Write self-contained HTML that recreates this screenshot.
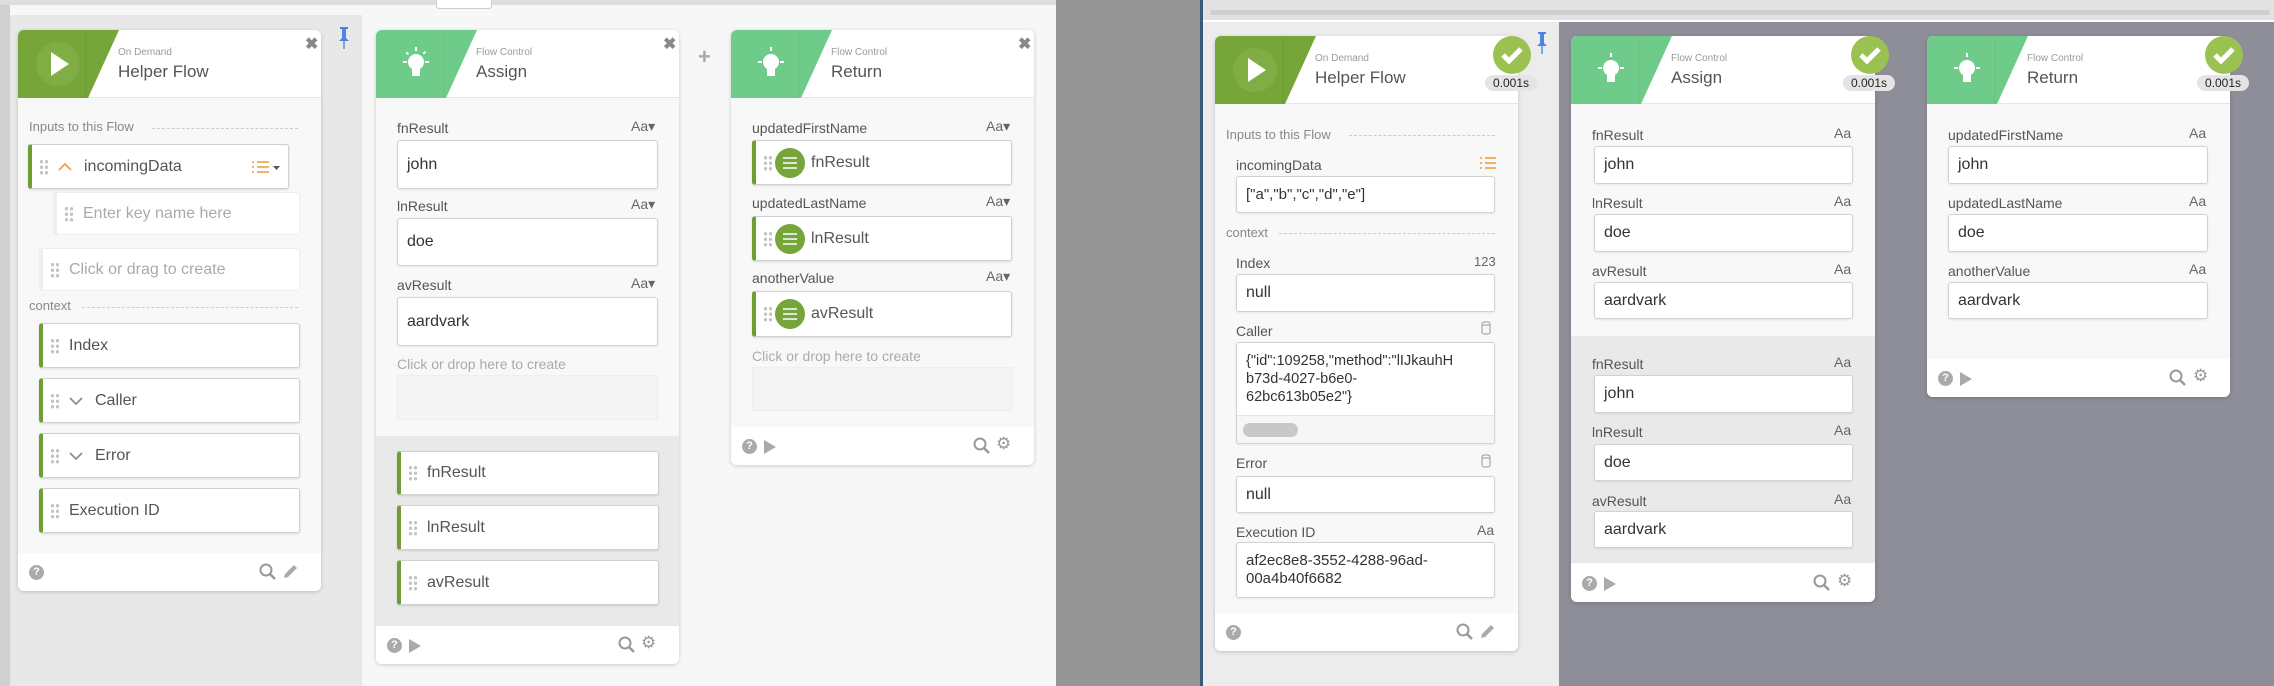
<!DOCTYPE html>
<html><head><meta charset="utf-8"><style>
*{box-sizing:border-box;margin:0;padding:0}
body{width:2274px;height:686px;position:relative;overflow:hidden;background:#f7f7f7;font-family:"Liberation Sans",sans-serif;color:#555}
.a{position:absolute}
.card{position:absolute;background:#fff;border-radius:6px;box-shadow:0 1px 4px rgba(0,0,0,.18);overflow:hidden}
.hdr{position:absolute;left:0;top:0;right:0;height:68px;border-bottom:1px solid #e6e6e6;background:#fff}
.body{position:absolute;left:0;top:68px;right:0;background:#f8f8f8}
.sub{position:absolute;font-size:10px;color:#9a9a9a}
.ttl{position:absolute;font-size:17px;color:#555}
.lbl{position:absolute;font-size:14px;color:#555}
.sec{position:absolute;font-size:13px;color:#888}
.dash{position:absolute;border-top:1px dashed #ccc;height:0}
.box{position:absolute;background:#fff;border:1px solid #d2d2d2;border-radius:3px;font-size:16px;color:#333;padding-left:9px;display:flex;align-items:center;box-shadow:0 1px 2px rgba(0,0,0,.08)}
.pill{position:absolute;background:#fff;border:1px solid #d0d0d0;border-left:4px solid #6f9f34;border-radius:3px;font-size:16px;color:#555;display:flex;align-items:center;box-shadow:0 1px 2px rgba(0,0,0,.12)}
.dots{width:10px;height:16px;margin-left:7px;margin-right:9px;background:radial-gradient(circle,#c4c4c4 1.6px,transparent 1.8px) 0 0/5px 5.5px}
.aa{position:absolute;font-size:14px;color:#666}
.foot{position:absolute;left:0;right:0;bottom:0;height:38px;background:#fff}
.x{position:absolute;font-size:16px;color:#888;font-weight:bold}
.chk{position:absolute;width:38px;height:38px;border-radius:50%;background:#9bc152}
.tm{position:absolute;background:#e4e4e4;border-radius:8px;font-size:12px;color:#222;width:52px;height:16px;text-align:center;line-height:16px}
</style></head><body>
<div class="a" style="left:0;top:0;width:2274px;height:5px;background:#dedede"></div>
<div class="a" style="left:436px;top:0;width:56px;height:9px;background:#fff;border:1px solid #ccc;border-top:none;border-radius:0 0 3px 3px"></div>
<div class="a" style="left:0;top:15px;width:362px;height:671px;background:#e8e8e8"></div>
<div class="a" style="left:0;top:5px;width:10px;height:681px;background:#d0d0d0"></div>
<div class="a" style="left:1056px;top:0;width:144px;height:686px;background:#959595"></div>
<div class="a" style="left:1200px;top:0;width:3px;height:686px;background:#3a5a7a"></div>
<div class="a" style="left:1203px;top:0;width:1071px;height:686px;background:#8e8e98"></div>
<div class="a" style="left:1203px;top:0;width:1071px;height:20px;background:#e2e2e2"></div>
<div class="a" style="left:1210px;top:10px;width:1060px;height:5px;background:#cfcfcf;border-radius:3px"></div>
<div class="a" style="left:1203px;top:20px;width:356px;height:666px;background:#ececec"></div>
<div class="a" style="left:1203px;top:20px;width:1071px;height:2px;background:#fff"></div>

<svg class="a" style="left:337px;top:26px" width="14" height="24" viewBox="0 0 14 24"><path d="M3 1h8v2h-2v9l3 3H2l3-3V3H3z M6.3 15h1.4v8h-1.4z" fill="#4a86e0"/></svg>
<svg class="a" style="left:1535px;top:31px" width="14" height="24" viewBox="0 0 14 24"><path d="M3 1h8v2h-2v9l3 3H2l3-3V3H3z M6.3 15h1.4v8h-1.4z" fill="#4a86e0"/></svg>
<div class="a" style="left:698px;top:44px;font-size:22px;color:#aaa;font-weight:bold">+</div>

<!-- CARD 1 -->
<div class="card" style="left:18px;top:30px;width:303px;height:561px">
 <div class="body" style="bottom:38px"></div>
 <div class="hdr"><svg class="a" style="left:0;top:0" width="110" height="68"><polygon points="0,0 101,0 70,68 0,68" fill="#76a63a"/><line x1="68" y1="0" x2="68" y2="68" stroke="#6d9b35"/><circle cx="40" cy="34" r="22" fill="#80ae45"/><polygon points="33,22 51,34 33,46" fill="#fff"/></svg>
 <div class="sub" style="left:100px;top:17px">On Demand</div><div class="ttl" style="left:100px;top:32px">Helper Flow</div>
 <div class="x" style="left:287px;top:4px">✖</div></div>
 <div class="sec" style="left:11px;top:89px">Inputs to this Flow</div><div class="dash" style="left:134px;top:98px;width:146px"></div>
 <div class="pill" style="left:10px;top:114px;width:261px;height:45px"><div class="dots"></div><svg width="14" height="10" style="margin-right:12px"><path d="M1 8l6-6 6 6" stroke="#f0a040" stroke-width="1.8" fill="none"/></svg>incomingData<svg style="margin-left:auto;margin-right:6px" width="30" height="14"><g stroke="#f0a040" stroke-width="1.6"><line x1="0" y1="2" x2="2" y2="2"/><line x1="5" y1="2" x2="17" y2="2"/><line x1="0" y1="7" x2="2" y2="7"/><line x1="5" y1="7" x2="17" y2="7"/><line x1="0" y1="12" x2="2" y2="12"/><line x1="5" y1="12" x2="17" y2="12"/></g><polygon points="21,6 28,6 24.5,10" fill="#555"/></svg></div>
 <div class="pill" style="left:35px;top:162px;width:247px;height:43px;border-left-color:#b5d08e;color:#aaa;box-shadow:none;border-color:#eee"><div class="dots"></div>Enter key name here</div>
 <div class="pill" style="left:21px;top:218px;width:261px;height:43px;border-left-color:#b5d08e;color:#aaa;box-shadow:none;border-color:#eee"><div class="dots"></div>Click or drag to create</div>
 <div class="sec" style="left:11px;top:268px">context</div><div class="dash" style="left:64px;top:277px;width:216px"></div>
 <div class="pill" style="left:21px;top:293px;width:261px;height:45px"><div class="dots"></div>Index</div>
 <div class="pill" style="left:21px;top:348px;width:261px;height:45px"><div class="dots"></div><svg width="14" height="10" style="margin-right:12px"><path d="M1 2l6 6 6-6" stroke="#888" stroke-width="1.6" fill="none"/></svg>Caller</div>
 <div class="pill" style="left:21px;top:403px;width:261px;height:45px"><div class="dots"></div><svg width="14" height="10" style="margin-right:12px"><path d="M1 2l6 6 6-6" stroke="#888" stroke-width="1.6" fill="none"/></svg>Error</div>
 <div class="pill" style="left:21px;top:458px;width:261px;height:45px"><div class="dots"></div>Execution ID</div>
 <div class="foot"><div class="a" style="left:11px;top:12px;width:15px;height:15px;border-radius:50%;background:#aaa;color:#fff;font-size:11px;font-weight:bold;text-align:center;line-height:15px">?</div>
 <svg class="a" style="left:241px;top:10px" width="18" height="18"><circle cx="7" cy="7" r="5.5" stroke="#999" stroke-width="2" fill="none"/><line x1="11" y1="11" x2="16" y2="16" stroke="#999" stroke-width="2.5"/></svg>
 <svg class="a" style="left:263px;top:10px" width="18" height="18"><path d="M3 15l1-4 9-9 3 3-9 9z" fill="#aaa"/></svg></div>
</div>

<!-- CARD 2 -->
<div class="card" style="left:376px;top:30px;width:303px;height:634px">
 <div class="body" style="bottom:38px"></div>
 <div class="a" style="left:0;top:406px;right:0;height:190px;background:#e9e9ea"></div>
 <div class="hdr"><svg class="a" style="left:0;top:0" width="110" height="68"><polygon points="0,0 101,0 70,68 0,68" fill="#6fcb8a"/><line x1="68" y1="0" x2="68" y2="68" stroke="#68c283"/><g fill="#fff"><circle cx="40" cy="32" r="8"/><rect x="36" y="37" width="8" height="9"/><rect x="39" y="17" width="2" height="4"/><rect x="27" y="31" width="4" height="2"/><rect x="49" y="31" width="4" height="2"/><rect x="30" y="22" width="3" height="2" transform="rotate(40 31 23)"/><rect x="47" y="22" width="3" height="2" transform="rotate(-40 48 23)"/></g></svg>
 <div class="sub" style="left:100px;top:17px">Flow Control</div><div class="ttl" style="left:100px;top:32px">Assign</div>
 <div class="x" style="left:287px;top:4px">✖</div></div>
 <div class="lbl" style="left:21px;top:90px">fnResult</div><div class="aa" style="left:255px;top:88px">Aa▾</div>
 <div class="box" style="left:21px;top:110px;width:261px;height:49px">john</div>
 <div class="lbl" style="left:21px;top:168px">lnResult</div><div class="aa" style="left:255px;top:166px">Aa▾</div>
 <div class="box" style="left:21px;top:188px;width:261px;height:48px">doe</div>
 <div class="lbl" style="left:21px;top:247px">avResult</div><div class="aa" style="left:255px;top:245px">Aa▾</div>
 <div class="box" style="left:21px;top:267px;width:261px;height:49px">aardvark</div>
 <div class="lbl" style="left:21px;top:326px;color:#aaa">Click or drop here to create</div>
 <div class="a" style="left:21px;top:345px;width:261px;height:45px;background:#f4f4f4;border:1px solid #eee"></div>
 <div class="pill" style="left:21px;top:421px;width:262px;height:44px"><div class="dots"></div>fnResult</div>
 <div class="pill" style="left:21px;top:475px;width:262px;height:45px"><div class="dots"></div>lnResult</div>
 <div class="pill" style="left:21px;top:530px;width:262px;height:45px"><div class="dots"></div>avResult</div>
 <div class="foot"><div class="a" style="left:11px;top:12px;width:15px;height:15px;border-radius:50%;background:#aaa;color:#fff;font-size:11px;font-weight:bold;text-align:center;line-height:15px">?</div><svg class="a" style="left:32px;top:12px" width="14" height="16"><polygon points="1,1 13,8 1,15" fill="#aaa"/></svg>
 <svg class="a" style="left:242px;top:10px" width="18" height="18"><circle cx="7" cy="7" r="5.5" stroke="#999" stroke-width="2" fill="none"/><line x1="11" y1="11" x2="16" y2="16" stroke="#999" stroke-width="2.5"/></svg>
 <div class="a" style="left:265px;top:7px;font-size:17px;color:#999">⚙</div></div>
</div>

<!-- CARD 3 -->
<div class="card" style="left:731px;top:30px;width:303px;height:435px">
 <div class="body" style="bottom:38px"></div>
 <div class="hdr"><svg class="a" style="left:0;top:0" width="110" height="68"><polygon points="0,0 101,0 70,68 0,68" fill="#6fcb8a"/><line x1="68" y1="0" x2="68" y2="68" stroke="#68c283"/><g fill="#fff"><circle cx="40" cy="32" r="8"/><rect x="36" y="37" width="8" height="9"/><rect x="39" y="17" width="2" height="4"/><rect x="27" y="31" width="4" height="2"/><rect x="49" y="31" width="4" height="2"/></g></svg>
 <div class="sub" style="left:100px;top:17px">Flow Control</div><div class="ttl" style="left:100px;top:32px">Return</div>
 <div class="x" style="left:287px;top:4px">✖</div></div>
 <div class="lbl" style="left:21px;top:90px">updatedFirstName</div><div class="aa" style="left:255px;top:88px">Aa▾</div>
 <div class="pill" style="left:21px;top:110px;width:260px;height:45px"><div class="dots" style="margin-right:2px"></div><svg width="30" height="30" style="margin-right:6px"><circle cx="15" cy="15" r="15" fill="#76a63a"/><g stroke="#fff" stroke-width="1.5"><line x1="8" y1="10" x2="22" y2="10"/><line x1="8" y1="15" x2="22" y2="15"/><line x1="8" y1="20" x2="22" y2="20"/></g></svg>fnResult</div>
 <div class="lbl" style="left:21px;top:165px">updatedLastName</div><div class="aa" style="left:255px;top:163px">Aa▾</div>
 <div class="pill" style="left:21px;top:186px;width:260px;height:45px"><div class="dots" style="margin-right:2px"></div><svg width="30" height="30" style="margin-right:6px"><circle cx="15" cy="15" r="15" fill="#76a63a"/><g stroke="#fff" stroke-width="1.5"><line x1="8" y1="10" x2="22" y2="10"/><line x1="8" y1="15" x2="22" y2="15"/><line x1="8" y1="20" x2="22" y2="20"/></g></svg>lnResult</div>
 <div class="lbl" style="left:21px;top:240px">anotherValue</div><div class="aa" style="left:255px;top:238px">Aa▾</div>
 <div class="pill" style="left:21px;top:261px;width:260px;height:46px"><div class="dots" style="margin-right:2px"></div><svg width="30" height="30" style="margin-right:6px"><circle cx="15" cy="15" r="15" fill="#76a63a"/><g stroke="#fff" stroke-width="1.5"><line x1="8" y1="10" x2="22" y2="10"/><line x1="8" y1="15" x2="22" y2="15"/><line x1="8" y1="20" x2="22" y2="20"/></g></svg>avResult</div>
 <div class="lbl" style="left:21px;top:318px;color:#aaa">Click or drop here to create</div>
 <div class="a" style="left:21px;top:337px;width:261px;height:44px;background:#f4f4f4;border:1px solid #eee"></div>
 <div class="foot"><div class="a" style="left:11px;top:12px;width:15px;height:15px;border-radius:50%;background:#aaa;color:#fff;font-size:11px;font-weight:bold;text-align:center;line-height:15px">?</div><svg class="a" style="left:32px;top:12px" width="14" height="16"><polygon points="1,1 13,8 1,15" fill="#aaa"/></svg>
 <svg class="a" style="left:242px;top:10px" width="18" height="18"><circle cx="7" cy="7" r="5.5" stroke="#999" stroke-width="2" fill="none"/><line x1="11" y1="11" x2="16" y2="16" stroke="#999" stroke-width="2.5"/></svg>
 <div class="a" style="left:265px;top:7px;font-size:17px;color:#999">⚙</div></div>
</div>

<!-- CARD 4 -->
<div class="card" style="left:1215px;top:36px;width:303px;height:615px">
 <div class="body" style="bottom:38px"></div>
 <div class="hdr"><svg class="a" style="left:0;top:0" width="110" height="68"><polygon points="0,0 101,0 70,68 0,68" fill="#76a63a"/><line x1="68" y1="0" x2="68" y2="68" stroke="#6d9b35"/><circle cx="40" cy="34" r="22" fill="#80ae45"/><polygon points="33,22 51,34 33,46" fill="#fff"/></svg>
 <div class="sub" style="left:100px;top:17px">On Demand</div><div class="ttl" style="left:100px;top:32px">Helper Flow</div></div>
 <div class="sec" style="left:11px;top:91px">Inputs to this Flow</div><div class="dash" style="left:134px;top:99px;width:146px"></div>
 <div class="lbl" style="left:21px;top:121px">incomingData</div>
 <svg class="a" style="left:265px;top:120px" width="16" height="15"><g stroke="#f0a040" stroke-width="1.6"><line x1="0" y1="2" x2="2" y2="2"/><line x1="5" y1="2" x2="16" y2="2"/><line x1="0" y1="7" x2="2" y2="7"/><line x1="5" y1="7" x2="16" y2="7"/><line x1="0" y1="12" x2="2" y2="12"/><line x1="5" y1="12" x2="16" y2="12"/></g></svg>
 <div class="box" style="left:21px;top:140px;width:259px;height:37px;font-size:15px">["a","b","c","d","e"]</div>
 <div class="sec" style="left:11px;top:189px">context</div><div class="dash" style="left:64px;top:197px;width:216px"></div>
 <div class="lbl" style="left:21px;top:219px">Index</div><div class="aa" style="left:259px;top:218px;font-size:13px">123</div>
 <div class="box" style="left:21px;top:238px;width:259px;height:38px">null</div>
 <div class="lbl" style="left:21px;top:287px">Caller</div><svg class="a" style="left:266px;top:285px" width="10" height="14"><rect x="1" y="1" width="8" height="12" rx="2" stroke="#999" fill="none"/><line x1="1" y1="4" x2="9" y2="4" stroke="#999"/></svg>
 <div class="box" style="left:21px;top:306px;width:259px;height:102px;display:block;overflow:hidden;white-space:nowrap;padding-top:9px;font-size:14.5px;line-height:18px;border-radius:3px">{"id":109258,"method":"lIJkauhH<br>b73d-4027-b6e0-<br>62bc613b05e2"}<div class="a" style="left:0;right:0;top:72px;height:30px;background:#f6f6f6;border-top:1px solid #e4e4e4"><div class="a" style="left:6px;top:7px;width:55px;height:14px;border-radius:7px;background:#c8c8c8"></div></div></div>
 <div class="lbl" style="left:21px;top:419px">Error</div><svg class="a" style="left:266px;top:418px" width="10" height="14"><rect x="1" y="1" width="8" height="12" rx="2" stroke="#999" fill="none"/><line x1="1" y1="4" x2="9" y2="4" stroke="#999"/></svg>
 <div class="box" style="left:21px;top:440px;width:259px;height:37px">null</div>
 <div class="lbl" style="left:21px;top:488px">Execution ID</div><div class="aa" style="left:262px;top:486px">Aa</div>
 <div class="box" style="left:21px;top:506px;width:259px;height:56px;display:block;padding-top:9px;font-size:15px;line-height:18px">af2ec8e8-3552-4288-96ad-<br>00a4b40f6682</div>
 <div class="foot"><div class="a" style="left:11px;top:12px;width:15px;height:15px;border-radius:50%;background:#aaa;color:#fff;font-size:11px;font-weight:bold;text-align:center;line-height:15px">?</div>
 <svg class="a" style="left:241px;top:10px" width="18" height="18"><circle cx="7" cy="7" r="5.5" stroke="#999" stroke-width="2" fill="none"/><line x1="11" y1="11" x2="16" y2="16" stroke="#999" stroke-width="2.5"/></svg>
 <svg class="a" style="left:263px;top:10px" width="18" height="18"><path d="M3 15l1-4 9-9 3 3-9 9z" fill="#aaa"/></svg></div>
</div>

<!-- CARD 5 -->
<div class="card" style="left:1571px;top:36px;width:304px;height:566px">
 <div class="body" style="bottom:38px"></div>
 <div class="a" style="left:0;top:300px;right:0;height:227px;background:#e9e9ea"></div>
 <div class="hdr"><svg class="a" style="left:0;top:0" width="110" height="68"><polygon points="0,0 101,0 70,68 0,68" fill="#6fcb8a"/><line x1="68" y1="0" x2="68" y2="68" stroke="#68c283"/><g fill="#fff"><circle cx="40" cy="32" r="8"/><rect x="36" y="37" width="8" height="9"/><rect x="39" y="17" width="2" height="4"/><rect x="27" y="31" width="4" height="2"/><rect x="49" y="31" width="4" height="2"/></g></svg>
 <div class="sub" style="left:100px;top:17px">Flow Control</div><div class="ttl" style="left:100px;top:32px">Assign</div></div>
 <div class="lbl" style="left:21px;top:91px">fnResult</div><div class="aa" style="left:263px;top:89px">Aa</div>
 <div class="box" style="left:23px;top:110px;width:259px;height:38px">john</div>
 <div class="lbl" style="left:21px;top:159px">lnResult</div><div class="aa" style="left:263px;top:157px">Aa</div>
 <div class="box" style="left:23px;top:178px;width:259px;height:38px">doe</div>
 <div class="lbl" style="left:21px;top:227px">avResult</div><div class="aa" style="left:263px;top:225px">Aa</div>
 <div class="box" style="left:23px;top:246px;width:259px;height:37px">aardvark</div>
 <div class="lbl" style="left:21px;top:320px">fnResult</div><div class="aa" style="left:263px;top:318px">Aa</div>
 <div class="box" style="left:23px;top:339px;width:259px;height:38px">john</div>
 <div class="lbl" style="left:21px;top:388px">lnResult</div><div class="aa" style="left:263px;top:386px">Aa</div>
 <div class="box" style="left:23px;top:408px;width:259px;height:37px">doe</div>
 <div class="lbl" style="left:21px;top:457px">avResult</div><div class="aa" style="left:263px;top:455px">Aa</div>
 <div class="box" style="left:23px;top:475px;width:259px;height:37px">aardvark</div>
 <div class="foot"><div class="a" style="left:11px;top:12px;width:15px;height:15px;border-radius:50%;background:#aaa;color:#fff;font-size:11px;font-weight:bold;text-align:center;line-height:15px">?</div><svg class="a" style="left:32px;top:12px" width="14" height="16"><polygon points="1,1 13,8 1,15" fill="#aaa"/></svg>
 <svg class="a" style="left:242px;top:10px" width="18" height="18"><circle cx="7" cy="7" r="5.5" stroke="#999" stroke-width="2" fill="none"/><line x1="11" y1="11" x2="16" y2="16" stroke="#999" stroke-width="2.5"/></svg>
 <div class="a" style="left:266px;top:7px;font-size:17px;color:#999">⚙</div></div>
</div>

<!-- CARD 6 -->
<div class="card" style="left:1927px;top:36px;width:303px;height:361px">
 <div class="body" style="bottom:38px"></div>
 <div class="hdr"><svg class="a" style="left:0;top:0" width="110" height="68"><polygon points="0,0 101,0 70,68 0,68" fill="#6fcb8a"/><line x1="68" y1="0" x2="68" y2="68" stroke="#68c283"/><g fill="#fff"><circle cx="40" cy="32" r="8"/><rect x="36" y="37" width="8" height="9"/><rect x="39" y="17" width="2" height="4"/><rect x="27" y="31" width="4" height="2"/><rect x="49" y="31" width="4" height="2"/></g></svg>
 <div class="sub" style="left:100px;top:17px">Flow Control</div><div class="ttl" style="left:100px;top:32px">Return</div></div>
 <div class="lbl" style="left:21px;top:91px">updatedFirstName</div><div class="aa" style="left:262px;top:89px">Aa</div>
 <div class="box" style="left:21px;top:110px;width:260px;height:38px">john</div>
 <div class="lbl" style="left:21px;top:159px">updatedLastName</div><div class="aa" style="left:262px;top:157px">Aa</div>
 <div class="box" style="left:21px;top:178px;width:260px;height:38px">doe</div>
 <div class="lbl" style="left:21px;top:227px">anotherValue</div><div class="aa" style="left:262px;top:225px">Aa</div>
 <div class="box" style="left:21px;top:246px;width:260px;height:37px">aardvark</div>
 <div class="foot"><div class="a" style="left:11px;top:12px;width:15px;height:15px;border-radius:50%;background:#aaa;color:#fff;font-size:11px;font-weight:bold;text-align:center;line-height:15px">?</div><svg class="a" style="left:32px;top:12px" width="14" height="16"><polygon points="1,1 13,8 1,15" fill="#aaa"/></svg>
 <svg class="a" style="left:242px;top:10px" width="18" height="18"><circle cx="7" cy="7" r="5.5" stroke="#999" stroke-width="2" fill="none"/><line x1="11" y1="11" x2="16" y2="16" stroke="#999" stroke-width="2.5"/></svg>
 <div class="a" style="left:266px;top:7px;font-size:17px;color:#999">⚙</div></div>
</div>

<div class="chk" style="left:1493px;top:36px"><svg width="38" height="38"><path d="M10 19l6 6 12-12" stroke="#fff" stroke-width="5" fill="none"/></svg></div>
<div class="tm" style="left:1485px;top:75px">0.001s</div>
<div class="chk" style="left:1851px;top:36px"><svg width="38" height="38"><path d="M10 19l6 6 12-12" stroke="#fff" stroke-width="5" fill="none"/></svg></div>
<div class="tm" style="left:1843px;top:75px">0.001s</div>
<div class="chk" style="left:2205px;top:36px"><svg width="38" height="38"><path d="M10 19l6 6 12-12" stroke="#fff" stroke-width="5" fill="none"/></svg></div>
<div class="tm" style="left:2197px;top:75px">0.001s</div>
</body></html>
